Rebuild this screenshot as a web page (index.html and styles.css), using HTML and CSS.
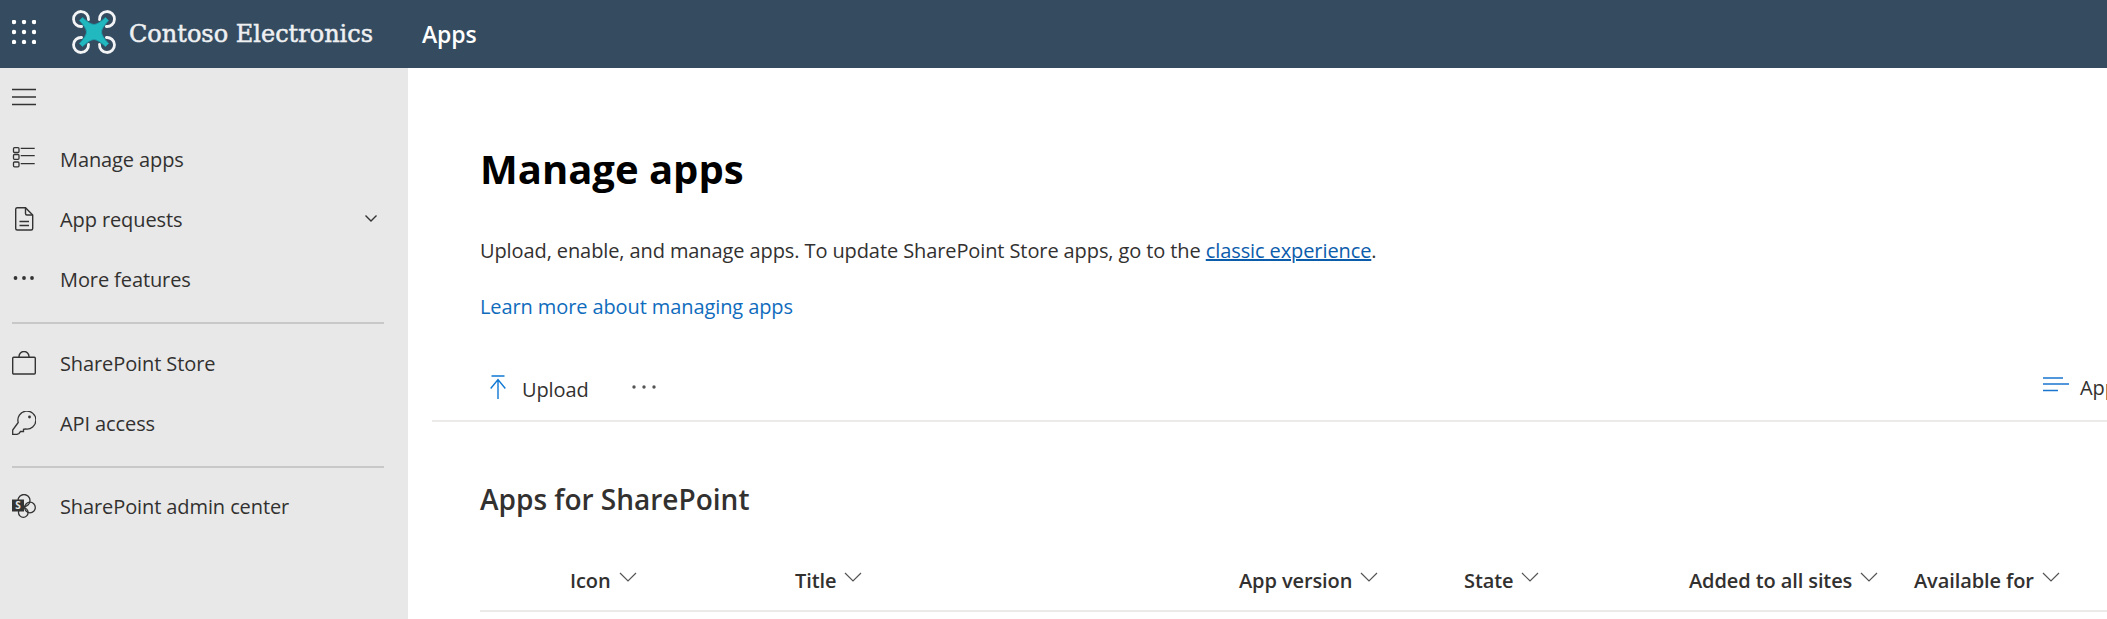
FILE: index.html
```html
<!DOCTYPE html>
<html lang="en">
<head>
    <meta charset="UTF-8">
    <meta name="viewport" content="width=device-width, initial-scale=1.0">
    <title>Manage apps</title>
    <link rel="stylesheet" href="styles.css">
</head>
<body>
    <header class="topbar">
        <button class="waffle" aria-label="App launcher">
            <svg width="24" height="24" viewBox="0 0 24 24" fill="#fff">
                <circle cx="2" cy="2" r="2.2"/><circle cx="12" cy="2" r="2.2"/><circle cx="22" cy="2" r="2.2"/>
                <circle cx="2" cy="12" r="2.2"/><circle cx="12" cy="12" r="2.2"/><circle cx="22" cy="12" r="2.2"/>
                <circle cx="2" cy="22" r="2.2"/><circle cx="12" cy="22" r="2.2"/><circle cx="22" cy="22" r="2.2"/>
            </svg>
        </button>
        <div class="logo">
            <svg class="logo-mark" width="44" height="44" viewBox="0 0 44 44">
                <g fill="none" stroke="#f2f4f5" stroke-width="2.8" stroke-linecap="round">
                    <path d="M9.6 16.500A7.500 7.500 0 1 1 16.500 9.600"/>
                    <path d="M27.500 9.600A7.500 7.500 0 1 1 34.400 16.500"/>
                    <path d="M9.600 27.500A7.500 7.500 0 1 0 16.500 34.400"/>
                    <path d="M27.500 34.400A7.500 7.500 0 1 0 34.400 27.500"/>
                </g>
                <path d="M7.500 10.500L10.500 7.500Q18 14.500 22 14.500Q26 14.500 33.500 7.500L36.500 10.500Q29.500 18 29.500 22Q29.500 26 36.500 33.500L33.500 36.500Q26 29.500 22 29.500Q18 29.500 10.500 36.500L7.500 33.500Q14.500 26 14.500 22Q14.500 18 7.500 10.500Z" fill="#22b8c0" stroke="#1c9fab" stroke-width="1" stroke-linejoin="round"/>
            </svg>
            <span class="logo-text">Contoso Electronics</span>
        </div>
        <span class="app-name">Apps</span>
    </header>

    <div class="layout">
        <nav class="sidebar">
            <button class="nav-toggle" aria-label="Toggle navigation">
                <svg width="24" height="18" viewBox="0 0 24 18" stroke="#333" stroke-width="1.400">
                    <path d="M0 1.500H24M0 9H24M0 16.500H24"/>
                </svg>
            </button>
            <ul class="nav-list">
                <li class="nav-item">
                    <svg class="nav-icon" width="24" height="24" viewBox="0 0 24 24" fill="none" stroke="#333" stroke-width="1.300">
                        <rect x="1.500" y="0.700" width="5.500" height="4.800" rx="1"/>
                        <rect x="1.500" y="7.500" width="5.500" height="4.800" rx="1"/>
                        <rect x="1.500" y="15" width="5.500" height="4.800" rx="1"/>
                        <path d="M8.700 1.300H22.700M8.700 8.700H22.700M8.700 16.700H22.700"/>
                    </svg>
                    <span>Manage apps</span>
                </li>
                <li class="nav-item">
                    <svg class="nav-icon" width="24" height="24" viewBox="0 0 24 24" fill="none" stroke="#333" stroke-width="1.400">
                        <path d="M3.700 2A1.500 1.500 0 0 1 5.200 0.700H13.500L20.700 8V21.500A1.500 1.500 0 0 1 19.200 23H5.200A1.500 1.500 0 0 1 3.700 21.500Z"/>
                        <path d="M13.500 0.700V6.500A1.500 1.500 0 0 0 15 8H20.700M7.500 14.500H17M7.500 18.500H17"/>
                    </svg>
                    <span>App requests</span>
                    <svg class="nav-chevron" width="12" height="7" viewBox="0 0 12 7" fill="none" stroke="#333" stroke-width="1.400">
                        <path d="M0.500 0.500L6 6L11.500 0.500"/>
                    </svg>
                </li>
                <li class="nav-item">
                    <svg class="nav-icon" width="24" height="24" viewBox="0 0 24 24" fill="#333">
                        <circle cx="3.500" cy="11" r="1.900"/><circle cx="12" cy="11" r="1.900"/><circle cx="20" cy="11" r="1.900"/>
                    </svg>
                    <span>More features</span>
                </li>
            </ul>
            <hr class="nav-divider">
            <ul class="nav-list nav-list-mid">
                <li class="nav-item">
                    <svg class="nav-icon" width="24" height="24" viewBox="0 0 24 24" fill="none" stroke="#333" stroke-width="1.400">
                        <rect x="0.700" y="6.300" width="22.600" height="16.700" rx="1"/>
                        <path d="M7 6.300V5.500A5 5 0 0 1 17 5.500V6.300"/>
                    </svg>
                    <span>SharePoint Store</span>
                </li>
                <li class="nav-item">
                    <svg class="nav-icon" width="24" height="24" viewBox="0 0 24 24" fill="none" stroke="#333" stroke-width="1.300">
                        <path d="M6.200 11.500A9 9 0 1 1 13.500 18L11.500 18.300V20.500H8.500L7 22.500L5 23.300H0.700V19Z"/>
                        <circle cx="17.500" cy="6" r="1.400" fill="#333" stroke="none"/>
                    </svg>
                    <span>API access</span>
                </li>
            </ul>
            <hr class="nav-divider">
            <ul class="nav-list">
                <li class="nav-item">
                    <svg class="nav-icon" width="24" height="24" viewBox="0 0 24 24" fill="none" stroke="#333" stroke-width="1.300">
                        <circle cx="12" cy="6.500" r="6"/>
                        <circle cx="18" cy="13.500" r="5.300"/>
                        <circle cx="11.300" cy="18.500" r="4.800"/>
                        <rect x="0" y="5.500" width="12" height="12" fill="#333" stroke="none"/>
                        <text class="sp-letter" x="6" y="15">S</text>
                    </svg>
                    <span>SharePoint admin center</span>
                </li>
            </ul>
        </nav>

        <main class="content">
            <h1 class="page-title">Manage apps</h1>
            <p class="page-desc">Upload, enable, and manage apps. To update SharePoint Store apps, go to the <a class="classic-link" href="#">classic experience</a>.</p>
            <p class="page-learn"><a class="learn-link" href="#">Learn more about managing apps</a></p>

            <div class="toolbar">
                <div class="toolbar-left">
                    <button class="cmd">
                        <svg width="16" height="24" viewBox="0 0 16 24" fill="none" stroke="#0f78d4" stroke-width="1.400">
                            <path d="M1.500 1H14.500M8 24V4.500M0.700 13.500L8 4.500L15.300 13.500"/>
                        </svg>
                        <span class="cmd-label">Upload</span>
                    </button>
                    <button class="cmd-more" aria-label="More">
                        <svg width="24" height="6" viewBox="0 0 24 6" fill="#555">
                            <circle cx="2" cy="3" r="1.700"/><circle cx="12" cy="3" r="1.700"/><circle cx="22" cy="3" r="1.700"/>
                        </svg>
                    </button>
                </div>
                <div class="toolbar-right">
                    <svg width="26" height="16" viewBox="0 0 26 16" stroke="#1a76cf" stroke-width="1.500">
                        <path d="M0 1H20M0 7H26M0 13.500H15"/>
                    </svg>
                    <span>Apps that need attention</span>
                </div>
            </div>

            <h2 class="section-title">Apps for SharePoint</h2>

            <div class="table-head">
                <div class="col col-icon">Icon<svg class="sort" width="18" height="10" viewBox="0 0 18 10"><path d="M1 1L9 9L17 1"/></svg></div>
                <div class="col">Title<svg class="sort" width="18" height="10" viewBox="0 0 18 10"><path d="M1 1L9 9L17 1"/></svg></div>
                <div class="col">App version<svg class="sort" width="18" height="10" viewBox="0 0 18 10"><path d="M1 1L9 9L17 1"/></svg></div>
                <div class="col">State<svg class="sort" width="18" height="10" viewBox="0 0 18 10"><path d="M1 1L9 9L17 1"/></svg></div>
                <div class="col">Added to all sites<svg class="sort" width="18" height="10" viewBox="0 0 18 10"><path d="M1 1L9 9L17 1"/></svg></div>
                <div class="col">Available for<svg class="sort" width="18" height="10" viewBox="0 0 18 10"><path d="M1 1L9 9L17 1"/></svg></div>
            </div>
        </main>
    </div>
</body>
</html>
```

FILE: styles.css
```css
* {
    box-sizing: border-box;
    margin: 0;
    padding: 0;
}

html, body {
    height: 100%;
    overflow: hidden;
}

body {
    font-family: "Open Sans", "Noto Sans", sans-serif;
    letter-spacing: -0.1px;
    color: #323130;
    background: #fff;
}

button {
    background: none;
    border: none;
    font: inherit;
    letter-spacing: inherit;
    color: inherit;
}

/* Top bar */
.topbar {
    display: flex;
    align-items: center;
    height: 68px;
    background: #344b60;
    color: #fff;
    padding-left: 12px;
}

.waffle {
    display: flex;
    width: 24px;
    height: 24px;
    margin-bottom: 5px;
}

.logo {
    display: flex;
    align-items: center;
    margin-left: 36px;
    width: 350px;
}

.logo-mark {
    flex: none;
    margin-bottom: 5px;
}

.logo-text {
    font-family: "DejaVu Serif", serif;
    font-size: 24px;
    letter-spacing: 0;
    color: #eef0f2;
    -webkit-text-stroke: 0.5px #eef0f2;
    margin-left: 13px;
    white-space: nowrap;
}

.app-name {
    font-size: 23px;
    font-weight: 600;
}

/* Layout */
.layout {
    display: flex;
    height: 551px;
}

/* Sidebar */
.sidebar {
    flex: none;
    width: 408px;
    background: #e8e8e8;
    padding: 0 24px 0 12px;
}

.nav-toggle {
    display: flex;
    height: 58px;
    margin-bottom: 4px;
    align-items: center;
}

.nav-list {
    list-style: none;
}

.nav-list-mid {
    padding-top: 1px;
    margin-bottom: 3px;
}

.nav-item {
    display: flex;
    align-items: center;
    height: 60px;
    padding-bottom: 2px;
    font-size: 20px;
}

.nav-icon {
    flex: none;
    margin-right: 24px;
}

.nav-chevron {
    margin-left: auto;
    margin-right: 7px;
    margin-bottom: 1px;
}

.nav-divider {
    border: none;
    height: 2px;
    background: #c8c8c8;
    margin: 12px 0 9px;
}

.sp-letter {
    font-size: 10px;
    font-weight: 700;
    fill: #e8e8e8;
    stroke: none;
    text-anchor: middle;
}

/* Main content */
.content {
    flex: 1;
    min-width: 0;
    padding: 73px 0 0 24px;
}

.page-title {
    font-size: 40px;
    line-height: 56px;
    font-weight: 700;
    letter-spacing: 0;
    color: #000;
    padding-left: 48px;
}

.page-desc {
    font-size: 20px;
    line-height: 28px;
    margin-top: 40px;
    padding-left: 48px;
}

.page-learn {
    font-size: 20px;
    line-height: 28px;
    margin-top: 28px;
    padding-left: 48px;
}

.classic-link {
    color: #0b5cab;
}

.learn-link {
    color: #0f6cbd;
    text-decoration: none;
}

/* Command bar */
.toolbar {
    display: flex;
    justify-content: space-between;
    align-items: center;
    height: 68px;
    margin-top: 33px;
    border-bottom: 2px solid #edebe9;
    padding-left: 58px;
}

.toolbar-left {
    display: flex;
    align-items: center;
}

.cmd {
    display: flex;
    align-items: center;
    gap: 16px;
    font-size: 20px;
}

.cmd-label {
    margin-top: 4px;
}

.cmd-more {
    display: flex;
    margin-left: 43px;
}

.toolbar-right {
    flex: none;
    display: flex;
    align-items: center;
    gap: 11px;
    width: 64px;
    overflow: hidden;
    white-space: nowrap;
    font-size: 20px;
}

.toolbar-right svg {
    flex: none;
    margin-bottom: 4px;
}

.section-title {
    font-size: 28px;
    line-height: 38px;
    font-weight: 600;
    letter-spacing: 0;
    margin-top: 58px;
    padding-left: 48px;
}

/* Table header */
.table-head {
    display: grid;
    grid-template-columns: 315px 444px 225px 225px 225px 1fr;
    align-items: center;
    height: 62px;
    margin: 32px 0 0 48px;
    border-bottom: 2px solid #edebe9;
    font-size: 20px;
    font-weight: 600;
}

.col {
    display: flex;
    align-items: center;
    gap: 8px;
    white-space: nowrap;
}

.col-icon {
    padding-left: 90px;
}

.sort {
    fill: none;
    stroke: #555;
    stroke-width: 1.200;
    margin-bottom: 6px;
}
```
